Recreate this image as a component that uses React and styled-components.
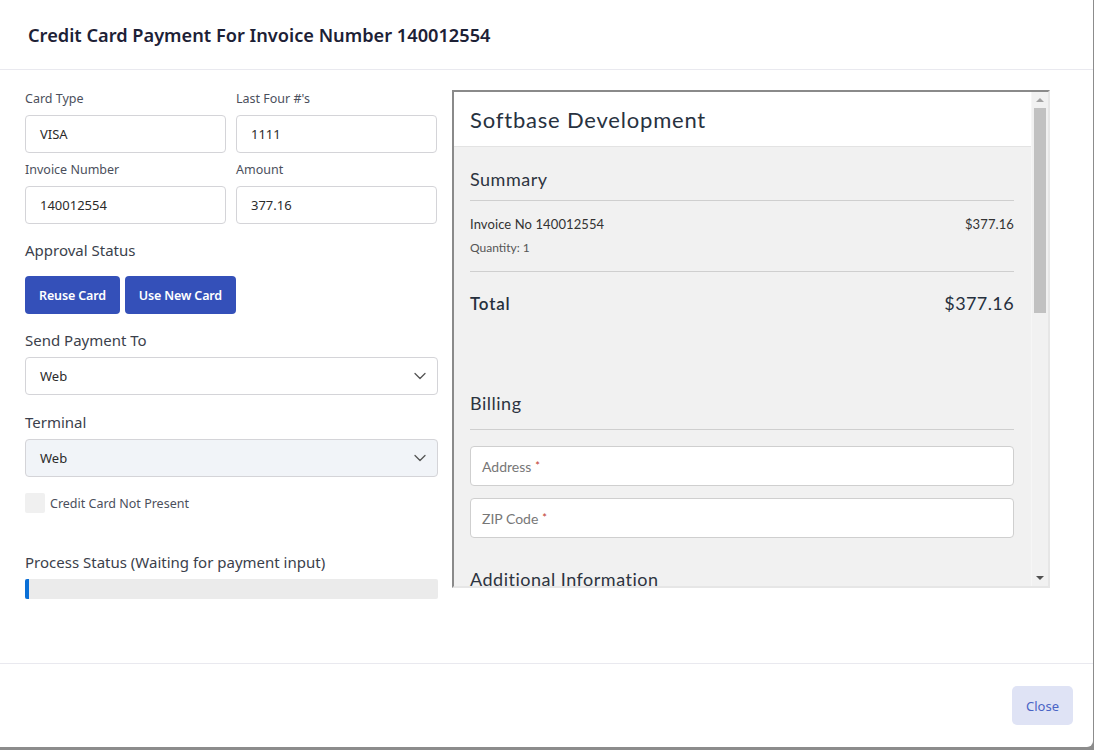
import React from 'react';
import styled, { createGlobalStyle } from 'styled-components';

const GlobalStyle = createGlobalStyle`
  html, body {
    margin: 0;
    padding: 0;
    background: #8c8c8c;
  }
  body {
    font-family: "Noto Sans", "Open Sans", sans-serif;
  }
  * { box-sizing: border-box; }
`;

const Modal = styled.div`
  width: 1093px;
  height: 747px;
  background: #fff;
  border-bottom-right-radius: 6px;
  display: flex;
  flex-direction: column;
`;

const Header = styled.div`
  height: 70px;
  padding: 0 28px;
  display: flex;
  align-items: center;
  border-bottom: 1px solid #e9e9ef;
`;

const Title = styled.h1`
  margin: 0;
  font-size: 18.2px;
  font-weight: 600;
  color: #1d2136;
`;

const Body = styled.div`
  flex: 1;
  display: flex;
  gap: 14px;
  padding: 20px 0 0 25px;
  border-bottom: 1px solid #e9e9ef;
`;

const LeftCol = styled.div`
  width: 413px;
  display: flex;
  flex-direction: column;
`;

const FieldGrid = styled.div`
  display: grid;
  grid-template-columns: 201px 201px;
  column-gap: 10px;
  row-gap: 8px;
`;

const Field = styled.div`
  display: flex;
  flex-direction: column;
`;

const SmallLabel = styled.label`
  font-size: 12.5px;
  line-height: 17px;
  color: #4b4f5c;
  margin-bottom: 8px;
`;

const TextBox = styled.div`
  height: 38px;
  border: 1px solid #d4d4d8;
  border-radius: 4px;
  padding: 0 14px;
  display: flex;
  align-items: center;
  font-size: 13px;
  color: #2b2b2b;
  background: ${p => (p.$muted ? '#f1f4f8' : '#fff')};
`;

const SectionLabel = styled.div`
  font-size: 15px;
  line-height: 20px;
  color: #3b3f4c;
  margin-top: ${p => p.$top || 16}px;
  margin-bottom: ${p => p.$bottom || 7}px;
`;

const ButtonRow = styled.div`
  display: flex;
  gap: 5px;
`;

const PrimaryButton = styled.button`
  height: 38px;
  padding: 0 14px;
  border: none;
  border-radius: 4px;
  background: #3450b9;
  color: #fff;
  font-family: inherit;
  font-size: 12.5px;
  font-weight: 600;
  letter-spacing: -0.15px;
`;

const Select = styled(TextBox)`
  justify-content: space-between;
  padding-right: 10px;
`;

const CheckRow = styled.div`
  display: flex;
  align-items: center;
  gap: 5px;
  margin-top: 16px;
  font-size: 12.5px;
  color: #4b4f5c;
`;

const CheckBox = styled.span`
  width: 20px;
  height: 20px;
  border-radius: 2px;
  background: #f0f0f0;
`;

const Progress = styled.div`
  height: 20px;
  background: #ebebeb;
  border-radius: 2px;
  overflow: hidden;
`;

const ProgressFill = styled.div`
  height: 100%;
  background: #0a6fd6;
`;

const Frame = styled.div`
  width: 598px;
  height: 498px;
  display: flex;
  border-top: 2px solid #8a8a8a;
  border-left: 2px solid #8a8a8a;
  border-right: 2px solid #e6e6e6;
  border-bottom: 2px solid #e6e6e6;
  font-family: Lato, "Noto Sans", sans-serif;
  overflow: hidden;
`;

const FrameContent = styled.div`
  flex: 1;
  background: #f1f1f1;
  display: flex;
  flex-direction: column;
  overflow: hidden;
`;

const FrameHeader = styled.div`
  height: 55px;
  flex-shrink: 0;
  background: #fff;
  border-bottom: 1px solid #e3e3e3;
  padding: 0 16px;
  display: flex;
  align-items: center;
  font-size: 22px;
  letter-spacing: 0.8px;
  color: #28323f;
`;

const Section = styled.div`
  padding: 0 17px 0 16px;
`;

const SectionTitle = styled.div`
  font-size: 18px;
  line-height: 22px;
  letter-spacing: 0.5px;
  color: #2d3440;
  margin-top: ${p => p.$top}px;
  padding-bottom: ${p => p.$gap || 10}px;
  border-bottom: ${p => (p.$line ? '1px solid #cfcfcf' : 'none')};
`;

const ItemRow = styled.div`
  display: flex;
  justify-content: space-between;
  font-size: 13px;
  color: #333;
  margin-top: 15px;
  letter-spacing: 0.1px;
`;

const Quantity = styled.div`
  font-size: 12px;
  color: #555;
  margin-top: 8px;
  padding-bottom: 16px;
  border-bottom: 1px solid #cfcfcf;
`;

const TotalRow = styled.div`
  display: flex;
  justify-content: space-between;
  align-items: center;
  margin-top: 20px;
  color: #26303d;
  font-size: 17px;
  font-weight: 600;
  letter-spacing: 0.8px;
`;

const TotalAmount = styled.span`
  font-weight: 400;
  font-size: 18px;
  letter-spacing: 0.4px;
`;

const FrameInput = styled.div`
  height: 40px;
  margin-top: ${p => p.$top}px;
  background: #fff;
  border: 1px solid #cfcfcf;
  border-radius: 4px;
  padding: 0 11px;
  display: flex;
  align-items: center;
  font-size: 14px;
  color: #777;
`;

const Req = styled.span`
  color: #c0392b;
  margin-left: 4px;
  font-size: 11px;
  align-self: flex-start;
  margin-top: 12px;
`;

const Scrollbar = styled.div`
  width: 17px;
  background: #f1f1f1;
  display: flex;
  flex-direction: column;
  align-items: center;
  border-left: 1px solid #f6f6f6;
`;

const Arrow = styled.div`
  width: 0;
  height: 0;
  margin: ${p => (p.$down ? '0 0 6px' : '6px 0 0')};
  border-left: 4px solid transparent;
  border-right: 4px solid transparent;
  ${p => (p.$down ? 'border-top: 4px solid #505050;' : 'border-bottom: 4px solid #a3a3a3;')}
`;

const Track = styled.div`
  flex: 1;
  width: 100%;
  padding: 6px 2px 0;
`;

const Thumb = styled.div`
  height: 205px;
  background: #c1c1c1;
`;

const Footer = styled.div`
  height: 83px;
  display: flex;
  justify-content: flex-end;
  align-items: center;
  padding-right: 20px;
`;

const CloseButton = styled.button`
  height: 39px;
  width: 61px;
  border: none;
  border-radius: 5px;
  background: #dfe3f5;
  color: #4a64c5;
  font-family: inherit;
  font-size: 13px;
`;

const Chevron = () => (
  <svg width="14" height="14" viewBox="0 0 14 14" fill="none">
    <path d="M2 4.5l5 5 5-5" stroke="#555" strokeWidth="1.3" strokeLinecap="round" strokeLinejoin="round" />
  </svg>
);

export default function App() {
  return (
    <>
      <GlobalStyle />
      <Modal>
        <Header>
          <Title>Credit Card Payment For Invoice Number 140012554</Title>
        </Header>
        <Body>
          <LeftCol>
            <FieldGrid>
              <Field>
                <SmallLabel>Card Type</SmallLabel>
                <TextBox>VISA</TextBox>
              </Field>
              <Field>
                <SmallLabel>Last Four #'s</SmallLabel>
                <TextBox>1111</TextBox>
              </Field>
              <Field>
                <SmallLabel>Invoice Number</SmallLabel>
                <TextBox>140012554</TextBox>
              </Field>
              <Field>
                <SmallLabel>Amount</SmallLabel>
                <TextBox>377.16</TextBox>
              </Field>
            </FieldGrid>
            <SectionLabel $top={16} $bottom={16}>Approval Status</SectionLabel>
            <ButtonRow>
              <PrimaryButton>Reuse Card</PrimaryButton>
              <PrimaryButton>Use New Card</PrimaryButton>
            </ButtonRow>
            <SectionLabel $top={16}>Send Payment To</SectionLabel>
            <Select>
              Web
              <Chevron />
            </Select>
            <SectionLabel $top={17}>Terminal</SectionLabel>
            <Select $muted>
              Web
              <Chevron />
            </Select>
            <CheckRow>
              <CheckBox />
              Credit Card Not Present
            </CheckRow>
            <SectionLabel $top={39}>Process Status (Waiting for payment input)</SectionLabel>
            <Progress>
              <ProgressFill style={{ width: '1%' }} />
            </Progress>
          </LeftCol>
          <Frame>
            <FrameContent>
              <FrameHeader>Softbase Development</FrameHeader>
              <Section>
                <SectionTitle $top={21} $line>Summary</SectionTitle>
                <ItemRow>
                  <span>Invoice No 140012554</span>
                  <span>$377.16</span>
                </ItemRow>
                <Quantity>Quantity: 1</Quantity>
                <TotalRow>
                  <span>Total</span>
                  <TotalAmount>$377.16</TotalAmount>
                </TotalRow>
                <SectionTitle $top={78} $gap={15} $line>Billing</SectionTitle>
                <FrameInput $top={16}>
                  Address<Req>*</Req>
                </FrameInput>
                <FrameInput $top={12}>
                  ZIP Code<Req>*</Req>
                </FrameInput>
                <SectionTitle $top={30}>Additional Information</SectionTitle>
              </Section>
            </FrameContent>
            <Scrollbar>
              <Arrow />
              <Track>
                <Thumb />
              </Track>
              <Arrow $down />
            </Scrollbar>
          </Frame>
        </Body>
        <Footer>
          <CloseButton>Close</CloseButton>
        </Footer>
      </Modal>
    </>
  );
}
